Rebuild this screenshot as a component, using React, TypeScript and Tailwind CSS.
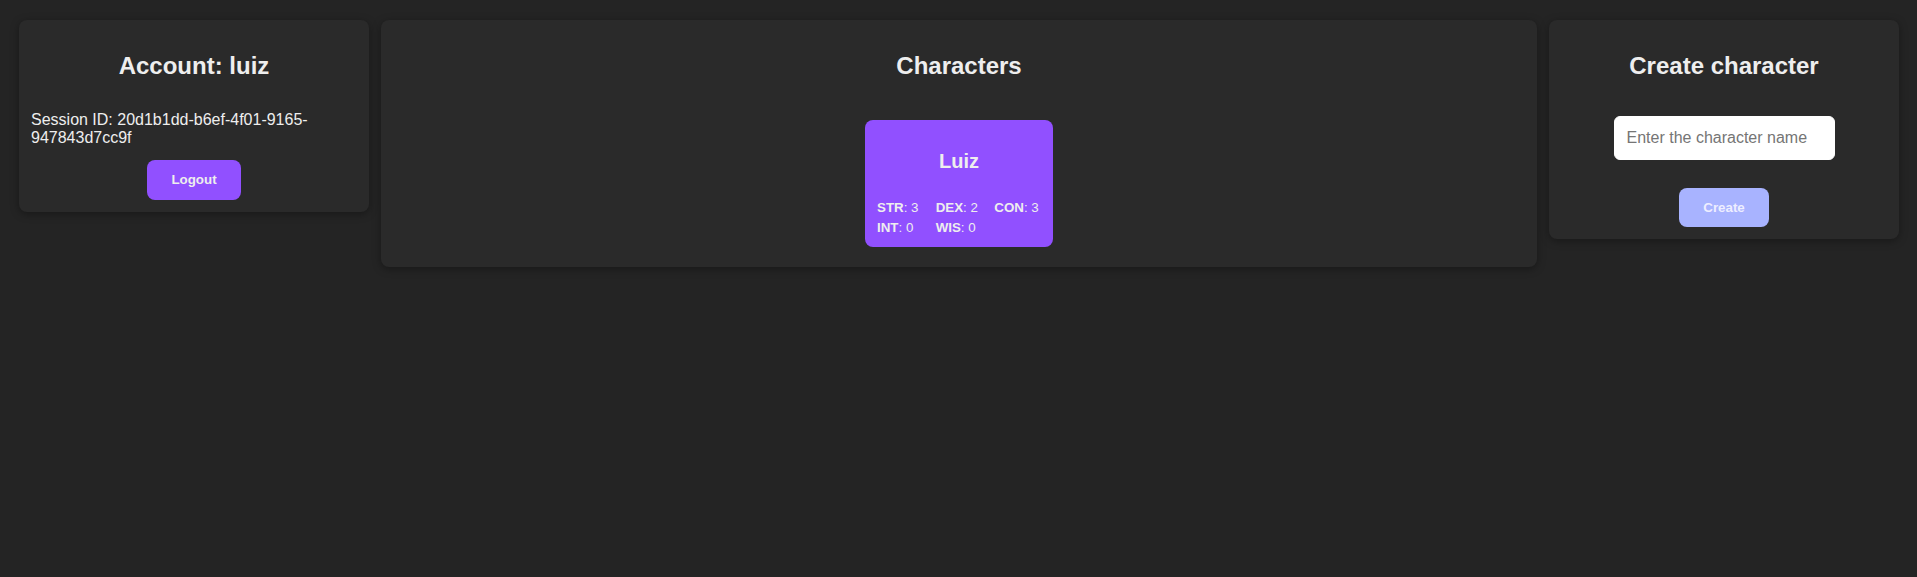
import { useState } from "react"

type Character = {
  name: string
  stats: { label: string; value: number }[]
}

const characters: Character[] = [
  {
    name: "Luiz",
    stats: [
      { label: "STR", value: 3 },
      { label: "DEX", value: 2 },
      { label: "CON", value: 3 },
      { label: "INT", value: 0 },
      { label: "WIS", value: 0 },
    ],
  },
]

function CharacterCard({ character }: { character: Character }) {
  return (
    <li className="w-[188px] rounded-lg bg-[#9150ff] px-3 pt-[30px] pb-3">
      <h3 className="text-center text-[20px] font-bold">{character.name}</h3>
      <div className="mt-[27px] grid grid-cols-3 gap-x-3 gap-y-[5px] text-[13.33px]">
        {character.stats.map((s) => (
          <span key={s.label} className="whitespace-nowrap">
            <strong>{s.label}</strong>: {s.value}
          </span>
        ))}
      </div>
    </li>
  )
}

export default function App() {
  const [name, setName] = useState("")

  return (
    <main className="min-h-screen bg-[#242424] font-['Liberation_Sans',Arial,sans-serif] leading-[1.15] text-[#eeeeee]">
      <div className="flex items-start gap-3 pt-5 pl-[19px] pr-[18px]">
        <section className="w-[350px] shrink-0 rounded-lg bg-[#2a2a2a] p-3 shadow-[0_2px_8px_rgba(0,0,0,0.35)]">
          <h2 className="mt-5 text-center text-2xl leading-[1.15] font-bold">
            Account: luiz
          </h2>
          <p className="mt-[31px] text-base leading-[1.15]">
            Session ID: 20d1b1dd-b6ef-4f01-9165-947843d7cc9f
          </p>
          <div className="mt-[13px] flex justify-center">
            <button className="rounded-lg bg-[#9150ff] px-6 py-3 text-[13.33px] font-bold">
              Logout
            </button>
          </div>
        </section>

        <section className="min-w-0 flex-1 rounded-lg bg-[#2a2a2a] px-3 pt-3 pb-5 shadow-[0_2px_8px_rgba(0,0,0,0.35)]">
          <h2 className="mt-5 text-center text-2xl leading-[1.15] font-bold">
            Characters
          </h2>
          <ul className="mt-[40px] flex list-none flex-wrap justify-center gap-3">
            {characters.map((c) => (
              <CharacterCard key={c.name} character={c} />
            ))}
          </ul>
        </section>

        <section className="w-[350px] shrink-0 rounded-lg bg-[#2a2a2a] p-3 shadow-[0_2px_8px_rgba(0,0,0,0.35)]">
          <h2 className="mt-5 text-center text-2xl leading-[1.15] font-bold">
            Create character
          </h2>
          <div className="mt-[36px] flex flex-col items-center">
            <input
              value={name}
              onChange={(e) => setName(e.target.value)}
              placeholder="Enter the character name"
              className="h-[44px] w-[221px] rounded-md border border-white bg-white px-3 text-base text-[#222] placeholder:text-[#757575] focus:outline-none"
            />
            <button
              disabled={!name}
              className="mt-[28px] rounded-lg bg-[#a8b3ff] px-6 py-3 text-[13.33px] font-bold text-[#eeeeff]"
            >
              Create
            </button>
          </div>
        </section>
      </div>
    </main>
  )
}
